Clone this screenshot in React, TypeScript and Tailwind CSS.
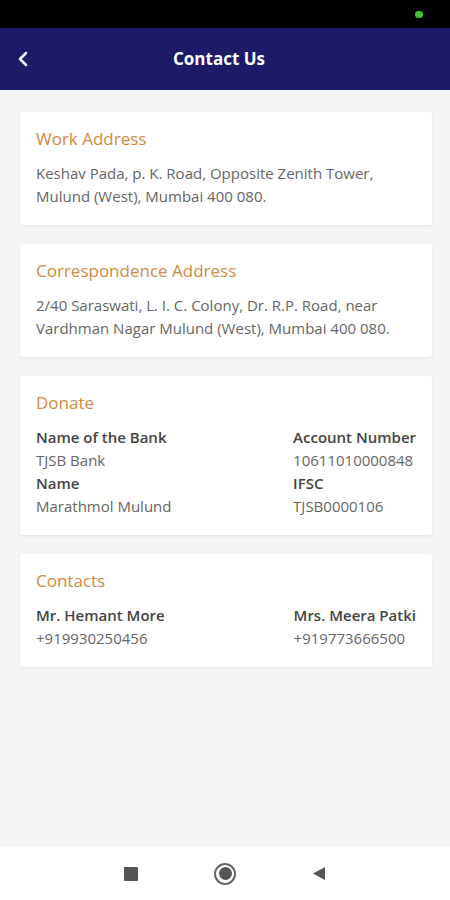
import { ChevronLeft } from "lucide-react";

type Pair = { label: string; value: string };

function Card({ title, children }: { title: string; children: React.ReactNode }) {
  return (
    <div className="bg-white rounded-[3px] shadow-[0_1px_3px_rgba(0,0,0,0.08)] px-4 pt-[16px] pb-[17px]">
      <h3 className="text-[17px] leading-[22px] text-[#cf8a43] mb-[12px]">{title}</h3>
      {children}
    </div>
  );
}

function Column({ items }: { items: Pair[] }) {
  return (
    <div className="flex flex-col">
      {items.map((it) => (
        <div key={it.label}>
          <div className="text-[15px] leading-[23px] text-[#444] font-semibold">{it.label}</div>
          <div className="text-[15px] leading-[23px] text-[#666]">{it.value}</div>
        </div>
      ))}
    </div>
  );
}

function App() {
  return (
    <div className="w-[450px] h-[900px] flex flex-col bg-[#f5f5f7] font-['Open_Sans','Noto_Sans',sans-serif]">
      <div className="h-[28px] bg-black flex items-center justify-end pr-[27px]">
        <span className="w-[8px] h-[7px] rounded-full bg-[#3fc43a]" />
      </div>

      <div className="h-[62px] bg-[#1d1a68] flex items-center relative">
        <button className="absolute left-[11px] text-white" aria-label="Back">
          <ChevronLeft size={24} strokeWidth={2.5} />
        </button>
        <h1 className="w-full text-center pr-[12px] text-white font-bold text-[17px]">Contact Us</h1>
      </div>

      <main className="flex-1 flex flex-col gap-[19px] pl-5 pr-[18px] pt-[22px]">
        <Card title="Work Address">
          <p className="text-[15px] leading-[23px] text-[#666]">
            Keshav Pada, p. K. Road, Opposite Zenith Tower,
            <br />
            Mulund (West), Mumbai 400 080.
          </p>
        </Card>

        <Card title="Correspondence Address">
          <p className="text-[15px] leading-[23px] text-[#666]">
            2/40 Saraswati, L. I. C. Colony, Dr. R.P. Road, near
            <br />
            Vardhman Nagar Mulund (West), Mumbai 400 080.
          </p>
        </Card>

        <Card title="Donate">
          <div className="flex justify-between">
            <Column
              items={[
                { label: "Name of the Bank", value: "TJSB Bank" },
                { label: "Name", value: "Marathmol Mulund" },
              ]}
            />
            <Column
              items={[
                { label: "Account Number", value: "10611010000848" },
                { label: "IFSC", value: "TJSB0000106" },
              ]}
            />
          </div>
        </Card>

        <Card title="Contacts">
          <div className="flex justify-between">
            <Column items={[{ label: "Mr. Hemant More", value: "+919930250456" }]} />
            <Column items={[{ label: "Mrs. Meera Patki", value: "+919773666500" }]} />
          </div>
        </Card>
      </main>

      <div className="h-[53px] bg-white flex items-center justify-center gap-[76px]">
        <span className="w-[14px] h-[14px] bg-[#555] rounded-[1px]" />
        <span className="w-[22px] h-[22px] rounded-full border-[2px] border-[#666] flex items-center justify-center">
          <span className="w-[13px] h-[13px] rounded-full bg-[#555]" />
        </span>
        <svg width="14" height="15" viewBox="0 0 14 15">
          <path d="M13 1 L1 7.5 L13 14 Z" fill="#555" />
        </svg>
      </div>
    </div>
  );
}

export default App;
